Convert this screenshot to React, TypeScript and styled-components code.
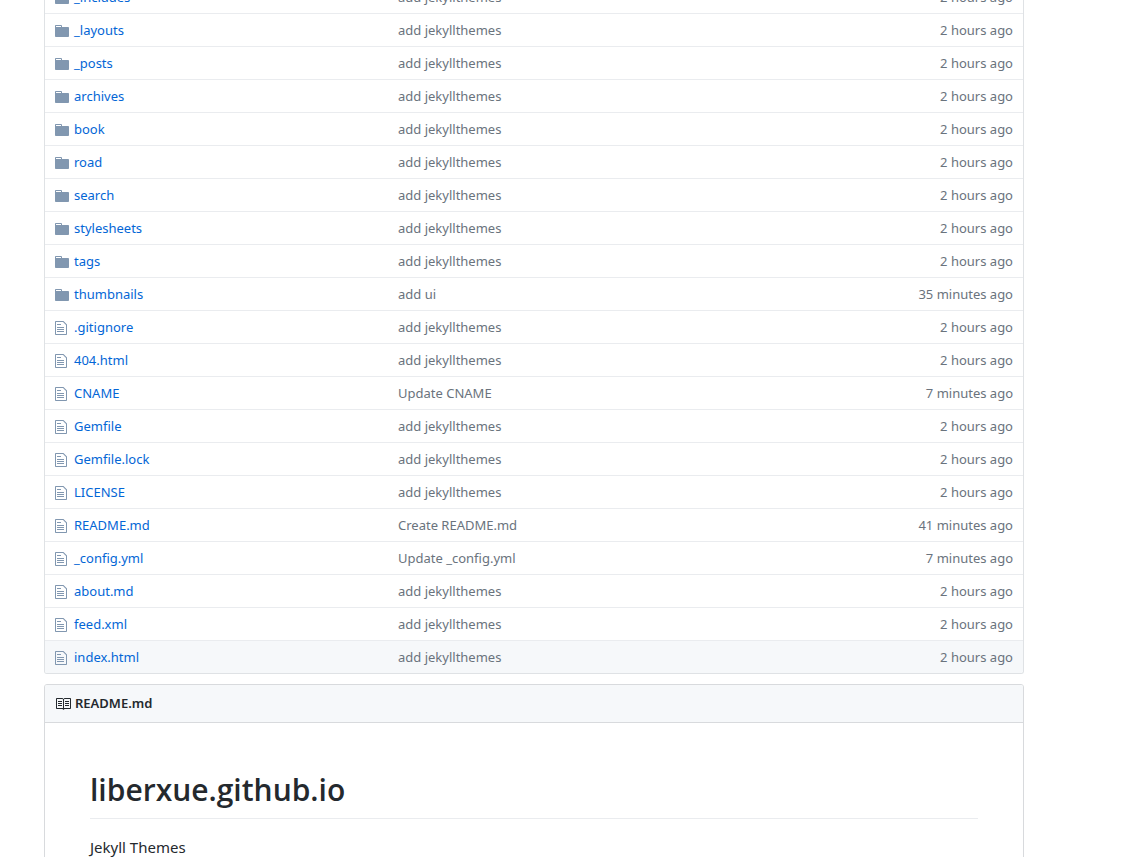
import React from "react";
import styled, { createGlobalStyle } from "styled-components";

const GlobalStyle = createGlobalStyle`
  * { box-sizing: border-box; }
  body {
    margin: 0;
    background: #fff;
    color: #24292e;
    font: 13px/20px "Segoe UI", "Noto Sans", "Open Sans", sans-serif;
  }
  a { color: #0366d6; text-decoration: none; }
  a:hover { text-decoration: underline; }
`;

const Page = styled.main`
  padding: 0 123px 0 44px;
  overflow: hidden;
`;

const FileBox = styled.section`
  margin-top: -20px;
  margin-bottom: 10px;
  border: 1px solid #dfe2e5;
  border-top: 0;
  border-radius: 3px;
  overflow: hidden;
`;

const FileTable = styled.table`
  width: 100%;
  table-layout: fixed;
  border-collapse: separate;
  border-spacing: 0;
`;

const Row = styled.tr<{ $active?: boolean }>`
  background: ${(p) => (p.$active ? "#f6f8fa" : "#fff")};
`;

const Cell = styled.td`
  height: 33px;
  padding: 6px 3px;
  border-top: 1px solid #eaecef;
  line-height: 20px;
  white-space: nowrap;
  overflow: hidden;
  text-overflow: ellipsis;
`;

const IconCell = styled(Cell)`
  width: 26px;
  padding: 8px 0 6px 10px;
  text-overflow: clip;
`;

const NameCell = styled(Cell)`
  width: 324px;
`;

const MessageCell = styled(Cell)`
  color: #6a737d;
`;

const AgeCell = styled(Cell)`
  width: 140px;
  padding-right: 10px;
  color: #6a737d;
  text-align: right;
`;

const Icon = styled.svg`
  display: block;
  fill: currentColor;
`;

const FileIcon = styled(Icon)`
  color: #8197b0;
`;

const Readme = styled.section`
  border: 1px solid #d8dadd;
  border-radius: 3px;
`;

const ReadmeHeader = styled.h3`
  display: flex;
  align-items: center;
  gap: 4px;
  margin: 0;
  padding: 9px 10px;
  border-bottom: 1px solid #d8dadd;
  border-radius: 2px 2px 0 0;
  background: #f6f8fa;
  font-size: 13px;
  font-weight: 600;
  line-height: 19px;
`;

const Article = styled.article`
  padding: 45px;
  font-size: 15px;
  line-height: 24px;
`;

const Title = styled.h1`
  margin: 0 0 16px;
  padding-bottom: 6px;
  border-bottom: 1px solid #eaecef;
  font-family: "Segoe UI", "Open Sans", sans-serif;
  font-size: 30px;
  font-weight: 600;
  line-height: 44px;
`;

const Paragraph = styled.p`
  margin: 0;
`;

type Kind = "dir" | "file";
type Entry = [kind: Kind, name: string, message: string, age: string];

const J = "add jekyllthemes";
const H = "2 hours ago";

const entries: Entry[] = [
  ["dir", "_includes", J, H],
  ["dir", "_layouts", J, H],
  ["dir", "_posts", J, H],
  ["dir", "archives", J, H],
  ["dir", "book", J, H],
  ["dir", "road", J, H],
  ["dir", "search", J, H],
  ["dir", "stylesheets", J, H],
  ["dir", "tags", J, H],
  ["dir", "thumbnails", "add ui", "35 minutes ago"],
  ["file", ".gitignore", J, H],
  ["file", "404.html", J, H],
  ["file", "CNAME", "Update CNAME", "7 minutes ago"],
  ["file", "Gemfile", J, H],
  ["file", "Gemfile.lock", J, H],
  ["file", "LICENSE", J, H],
  ["file", "README.md", "Create README.md", "41 minutes ago"],
  ["file", "_config.yml", "Update _config.yml", "7 minutes ago"],
  ["file", "about.md", J, H],
  ["file", "feed.xml", J, H],
  ["file", "index.html", J, H],
];

const EntryIcon = ({ kind }: { kind: Kind }) =>
  kind === "dir" ? (
    <FileIcon width="14" height="16" viewBox="0 0 14 16" aria-hidden="true">
      <path d="M13 4H7V3c0-.66-.31-1-1-1H1c-.55 0-1 .45-1 1v10c0 .55.45 1 1 1h12c.55 0 1-.45 1-1V5c0-.55-.45-1-1-1zM6 4H1V3h5v1z" />
    </FileIcon>
  ) : (
    <FileIcon width="12" height="16" viewBox="0 0 12 16" aria-hidden="true">
      <path d="M6 5H2V4h4v1zM2 8h7V7H2v1zm0 2h7V9H2v1zm0 2h7v-1H2v1zm10-7.5V14c0 .55-.45 1-1 1H1c-.55 0-1-.45-1-1V2c0-.55.45-1 1-1h7.5L12 4.5zM11 5L8 2H1v12h10V5z" />
    </FileIcon>
  );

export default function App() {
  return (
    <>
      <GlobalStyle />
      <Page>
        <FileBox>
          <FileTable>
            <tbody>
              {entries.map(([kind, name, message, age], i) => (
                <Row key={name} $active={i === entries.length - 1}>
                  <IconCell>
                    <EntryIcon kind={kind} />
                  </IconCell>
                  <NameCell>
                    <a href={`#${name}`}>{name}</a>
                  </NameCell>
                  <MessageCell>{message}</MessageCell>
                  <AgeCell>{age}</AgeCell>
                </Row>
              ))}
            </tbody>
          </FileTable>
        </FileBox>
        <Readme>
          <ReadmeHeader>
            <Icon width="16" height="16" viewBox="0 0 16 16" aria-hidden="true">
              <path d="M3 5h4v1H3V5zm0 3h4V7H3v1zm0 2h4V9H3v1zm11-5h-4v1h4V5zm0 2h-4v1h4V7zm0 2h-4v1h4V9zm2-6v9c0 .55-.45 1-1 1H9.5l-1 1-1-1H2c-.55 0-1-.45-1-1V3c0-.55.45-1 1-1h5.5l1 1 1-1H15c.55 0 1 .45 1 1zm-8 .5L7.5 3H2v9h6V3.5zm7-.5H9.5l-.5.5V12h6V3z" />
            </Icon>
            README.md
          </ReadmeHeader>
          <Article>
            <Title>liberxue.github.io</Title>
            <Paragraph>Jekyll Themes</Paragraph>
          </Article>
        </Readme>
      </Page>
    </>
  );
}
